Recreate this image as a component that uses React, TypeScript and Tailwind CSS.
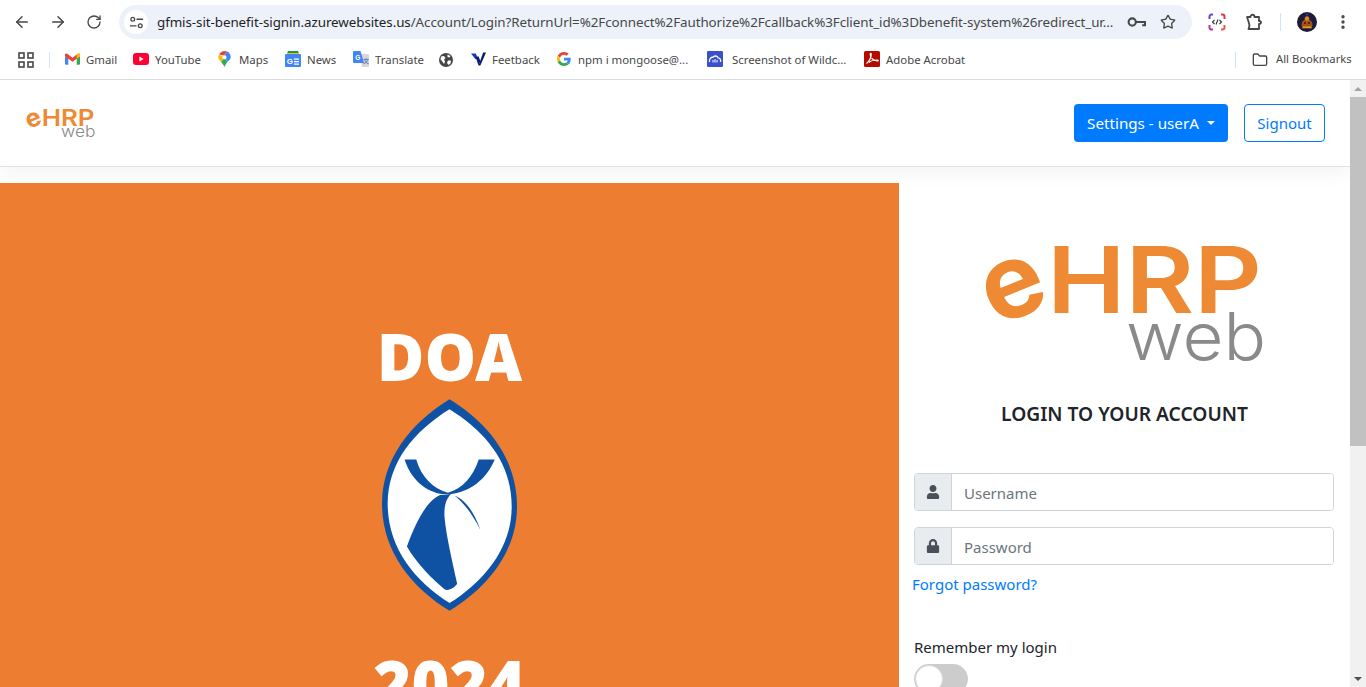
import { ArrowLeft, ArrowRight, RotateCw, Star, EllipsisVertical, Folder } from "lucide-react";
import { FaUser, FaLock } from "react-icons/fa";

function Logo({ className }: { className: string }) {
  return (
    <svg viewBox="0 0 277 118" className={`overflow-visible ${className}`}>
      <text x="27" y="72" textAnchor="middle" transform="rotate(-22 27 45)" fontFamily="Inter, sans-serif" fontWeight="700" fontSize="104" fill="#ee8a33">e</text>
      <text x="60" y="68" fontFamily="Inter, sans-serif" fontWeight="600" fontSize="92" fill="#ee8a33" textLength="215" lengthAdjust="spacingAndGlyphs">HRP</text>
      <text x="139" y="115" fontFamily="Inter, sans-serif" fontWeight="300" fontSize="66" fill="#8a8a8a" textLength="140" lengthAdjust="spacingAndGlyphs">web</text>
    </svg>
  );
}

function Emblem() {
  return (
    <svg viewBox="97 267 406 636" className="h-[212px] w-[135px]">
      <path fill="#0f52a3" d="M300 267C420 340 503 450 503 590C503 720 420 830 300 903C180 830 97 720 97 580C97 450 180 340 300 267Z" />
      <path fill="#fff" d="M300 297C410 365 487 460 487 590C487 710 410 810 300 880C190 810 114 710 114 580C114 460 190 365 300 297Z" />
      <path fill="#0f52a3" d="M165 448L200 448C215 500 250 535 295 548C340 535 370 500 388 448L436 448C410 510 360 545 305 552L275 552C215 540 180 495 165 448Z" />
      <path fill="#0f52a3" d="M272 555C235 570 200 630 172 710C200 760 250 810 285 838C295 845 315 835 323 822C310 760 290 680 285 620C283 590 290 565 305 552Z" />
      <path fill="#0f52a3" d="M316 557C350 570 375 610 393 660C370 615 345 580 316 557Z" />
    </svg>
  );
}

const GmailIcon = () => (
  <svg viewBox="0 0 16 12" className="h-[12px] w-[15px] shrink-0">
    <path fill="#4285f4" d="M0 3v8a1 1 0 0 0 1 1h2.500V5z" />
    <path fill="#34a853" d="M16 3v8a1 1 0 0 1-1 1h-2.500V5z" />
    <path fill="#ea4335" d="M0 1.500C0 .2 1.500-.4 2.400.4L8 4.600 13.600.4c.9-.8 2.400-.2 2.400 1.100V3l-3.500 2.600L8 9 3.500 5.600 0 3z" />
    <path fill="#fbbc04" d="M12.500 1.300V5.600L16 3V1.500C16 .2 14.500-.4 13.600.4z" />
  </svg>
);

const YoutubeIcon = () => (
  <svg viewBox="0 0 16 12" className="h-[12px] w-[16px] shrink-0">
    <rect width="16" height="12" rx="3" fill="#ff0033" />
    <path fill="#fff" d="M6.400 3.500v5L10.600 6z" />
  </svg>
);

const MapsIcon = () => (
  <svg viewBox="0 0 14 18" className="h-[16px] w-[13px] shrink-0">
    <path fill="#34a853" d="M3 12c1.500 2 3 3.500 4 6 1-2.500 2-4 3.500-6L7 8z" />
    <path fill="#fbbc04" d="M1 4C.3 5 0 6 0 7c0 2 1.500 3.500 3 5l4-4.500z" />
    <path fill="#4285f4" d="M10 .7 6 5l4.500 7C12.500 10 14 8.800 14 7c0-3-1.700-5.300-4-6.300z" />
    <path fill="#ea4335" d="M1 4l5 1 4-4.300C9 .2 8 0 7 0 4.500 0 2.300 1.500 1 4z" />
    <circle cx="7" cy="7" r="2.300" fill="#fff" />
  </svg>
);

const NewsIcon = () => (
  <svg viewBox="0 0 16 16" className="h-[16px] w-[16px] shrink-0">
    <path fill="#0c9d58" d="M2 2.500 3 0h10l1 2.500z" />
    <path fill="#fbbc04" d="M2 2h12v2H2z" />
    <rect y="3" width="16" height="13" rx="1" fill="#4285f4" />
    <text x="1.800" y="13" fontSize="8" fontWeight="700" fontFamily="Liberation Sans, sans-serif" fill="#fff">G</text>
    <path fill="#fff" d="M9 7.500h5v1.200H9zM9 10h5v1.200H9zM9 12.500h5v1.200H9z" />
  </svg>
);

const TranslateIcon = () => (
  <svg viewBox="0 0 16 16" className="h-[16px] w-[16px] shrink-0">
    <path fill="#d5d7da" d="M7 3h8a1 1 0 0 1 1 1v11a1 1 0 0 1-1 1H9z" />
    <path fill="#4285f4" d="M1 0h6.500L11 12H1a1 1 0 0 1-1-1V1a1 1 0 0 1 1-1z" />
    <text x="2.200" y="8.500" fontSize="6.500" fontWeight="700" fontFamily="Liberation Sans, sans-serif" fill="#fff">G</text>
    <text x="10" y="12" fontSize="6" fontWeight="700" fontFamily="Noto Sans CJK SC, sans-serif" fill="#5f7fb0">文</text>
  </svg>
);

const GlobeIcon = () => (
  <svg viewBox="0 0 14 14" className="h-[14px] w-[14px] shrink-0">
    <circle cx="7" cy="7" r="7" fill="#444746" />
    <path fill="#fff" d="M2 3.500 5 3l1.500 2L5 6.500 6 8.500 5 11 3 8 1.500 6.500zM8.500 1.500l3 1.500-1 1.500L8.500 4zM9 7.500h3l-.5 3-2 1.500L8 10z" />
  </svg>
);

const FeetbackIcon = () => (
  <svg viewBox="0 0 16 14" className="h-[14px] w-[15px] shrink-0">
    <path fill="#1736c9" d="M0 1h5l2 4-2 2.500z" />
    <path fill="#0b1d6b" d="M8 14 13 0h3L10 14z" />
    <path fill="#0b1d6b" d="M5 5l3-1 2 5-2 5z" />
  </svg>
);

const GoogleIcon = () => (
  <svg viewBox="0 0 48 48" className="h-[14px] w-[14px] shrink-0">
    <path fill="#ea4335" d="M24 9.500c3.500 0 6.600 1.200 9.100 3.600l6.800-6.800C35.800 2.500 30.300 0 24 0 14.600 0 6.500 5.400 2.600 13.200l7.900 6.200C12.400 13.700 17.700 9.500 24 9.500z" />
    <path fill="#4285f4" d="M46.900 24.500c0-1.600-.1-3.100-.4-4.500H24v9h12.900c-.6 3-2.200 5.500-4.700 7.200l7.700 6c4.500-4.200 7-10.300 7-17.700z" />
    <path fill="#fbbc05" d="M10.500 28.600c-.5-1.400-.8-3-.8-4.600s.3-3.200.8-4.600l-7.900-6.200C.9 16.500 0 20.100 0 24s.9 7.500 2.600 10.800z" />
    <path fill="#34a853" d="M24 48c6.500 0 11.900-2.100 15.900-5.800l-7.700-6c-2.200 1.400-4.900 2.300-8.200 2.300-6.300 0-11.600-4.200-13.500-9.900l-7.900 6.200C6.500 42.600 14.600 48 24 48z" />
  </svg>
);

const CloudIcon = () => (
  <svg viewBox="0 0 16 16" className="h-[16px] w-[16px] shrink-0">
    <rect width="16" height="16" rx="1" fill="#3a50c8" />
    <path fill="none" stroke="#fff" strokeWidth="1.300" d="M2.500 11C2 8 4 6 6 6.300 7 4.500 10.500 4.500 11 6.800c2-.2 3 2 2.500 4.200" />
    <path stroke="#fff" strokeWidth="1" d="M6 9v2.500M8 8v3.500M10 9v2.500" />
  </svg>
);

const AcrobatIcon = () => (
  <svg viewBox="0 0 16 16" className="h-[16px] w-[16px] shrink-0">
    <rect width="16" height="16" rx="1.500" fill="#b30b00" />
    <path fill="none" stroke="#fff" strokeWidth="1.200" d="M2.500 12.500C5 11 7.500 6 7.200 3c-.2-1-1-.8-1 .3C6.200 7 10 10 13.500 10c1 0 1-1-.2-1-3 0-7 1-8.300 2.500" />
  </svg>
);

const bookmarks = [
  { label: "Gmail", icon: GmailIcon, w: "w-[14px]", tw: "w-[31px]", gap: "mr-[16px]" },
  { label: "YouTube", icon: YoutubeIcon, w: "w-[15px]", tw: "w-[46px]", gap: "mr-[17px]" },
  { label: "Maps", icon: MapsIcon, w: "w-[14px]", tw: "w-[29px]", gap: "mr-[17px]" },
  { label: "News", icon: NewsIcon, w: "w-[15px]", tw: "w-[29px]", gap: "mr-[17px]" },
  { label: "Translate", icon: TranslateIcon, w: "w-[15px]", tw: "w-[47px]", gap: "mr-[17px]" },
];

const bookmarks2 = [
  { label: "Feetback", icon: FeetbackIcon, w: "w-[14px]", tw: "w-[48px]", gap: "mr-[17px]" },
  { label: "npm i mongoose@...", icon: GoogleIcon, w: "w-[14px]", tw: "w-[112px]", gap: "mr-[17px]" },
  { label: "Screenshot of Wildc...", icon: CloudIcon, w: "w-[18px]", tw: "w-[115px]", gap: "mr-[17px]" },
  { label: "Adobe Acrobat", icon: AcrobatIcon, w: "w-[15px]", tw: "w-[81px]", gap: "" },
];

type Mark = (typeof bookmarks)[number];

function Bookmark({ mark }: { mark: Mark }) {
  const Icon = mark.icon;
  return (
    <div className={`flex items-center gap-[7px] ${mark.gap}`}>
      <div className={`flex justify-start ${mark.w}`}>
        <Icon />
      </div>
      <span className={`whitespace-nowrap text-[11.400px] text-[#474747] ${mark.tw}`}>{mark.label}</span>
    </div>
  );
}

function BrowserChrome() {
  return (
    <header className="h-[80px] shrink-0 border-b border-[#dadce0] bg-white font-['Noto_Sans',sans-serif]">
      {/* Toolbar */}
      <div className="flex h-[40px] items-center pl-[13px] pr-[12px] pt-[4px]">
        <ArrowLeft className="h-[18px] w-[18px] text-[#474747]" />
        <ArrowRight className="ml-[18px] h-[18px] w-[18px] text-[#474747]" />
        <RotateCw className="ml-[19px] h-[16px] w-[16px] text-[#474747]" />
        <div className="ml-[17px] flex h-[34px] w-[1073px] items-center rounded-full bg-[#edf2fa] pl-[5px] pr-[14px]">
          <div className="flex h-[24px] w-[24px] items-center justify-center rounded-full bg-white">
            <svg viewBox="0 0 16 16" className="h-[15px] w-[15px]" fill="none" stroke="#474747" strokeWidth="1.400">
              <circle cx="4" cy="4.500" r="2" />
              <path d="M8 4.500h7M1 11.500h7" />
              <circle cx="12" cy="11.500" r="2" />
            </svg>
          </div>
          <span className="ml-[9px] w-[957px] shrink-0 overflow-hidden whitespace-nowrap text-[13.400px] tracking-[-0.08px] text-[#1f1f1f]">
            gfmis-sit-benefit-signin.azurewebsites.us<span className="text-[#474747]">/Account/Login?ReturnUrl=%2Fconnect%2Fauthorize%2Fcallback%3Fclient_id%3Dbenefit-system%26redirect_ur...</span>
          </span>
          <svg viewBox="0 0 20 12" className="ml-[13px] h-[12px] w-[19px] shrink-0" fill="none" stroke="#474747" strokeWidth="2.200">
            <circle cx="5.500" cy="6" r="3.800" />
            <path d="M9 6h10v3.500h-3" />
          </svg>
          <Star className="ml-[14px] h-[16px] w-[16px] shrink-0 text-[#474747]" strokeWidth={2} />
        </div>
        <svg viewBox="0 0 18 18" className="ml-[16px] h-[18px] w-[18px] shrink-0" fill="none" strokeWidth="2">
          <path stroke="#6a3fd8" d="M5 1.500H3.500a2 2 0 0 0-2 2V6" />
          <path stroke="#e0354a" d="M13 1.500h1.500a2 2 0 0 1 2 2V6" />
          <path stroke="#ef5a3c" d="M16.500 12v2.500a2 2 0 0 1-2 2H13" />
          <path stroke="#c2357f" d="M5 16.500H3.500a2 2 0 0 1-2-2V12" />
          <path stroke="#333" strokeWidth="1.100" d="M6.500 7 4.500 9l2 2M11.500 7l2 2-2 2M10 6.500l-2 5" />
        </svg>
        {/* extensions icon */}
        <svg viewBox="0 0 18 18" className="ml-[19px] h-[18px] w-[18px] shrink-0" fill="none" stroke="#474747" strokeWidth="1.800" strokeLinejoin="round">
          <path d="M2 4h3.500C5.500 1 9.500 1 9.500 4H14v4c2.600 0 2.600 3 0 3v5H3.500L4.500 12.500 3.500 8.500z" />
        </svg>
        <div className="ml-[17px] h-[18px] w-px bg-[#d3e3fd]" />
        <div className="ml-[16px] h-[20px] w-[20px] shrink-0">
          <svg viewBox="0 0 20 20" className="h-[20px] w-[20px]">
            <circle cx="10" cy="10" r="10" fill="#1f1a3a" />
            <path fill="#a0541a" d="M5 15c-1-3 0-6 2.500-7 0-3 5-3 5 0C15 9 16 12 15 15z" />
            <circle cx="10" cy="6.500" r="2.200" fill="#d98a1f" />
            <path fill="#e8a01f" d="M6 14.500h8l1 1.800H5z" />
            <circle cx="8" cy="11" r="1" fill="#3a1508" />
            <circle cx="12" cy="11" r="1" fill="#3a1508" />
            <circle cx="10" cy="2.500" r="1" fill="#5a3aa8" />
          </svg>
        </div>
        <EllipsisVertical className="ml-[17px] h-[18px] w-[18px] shrink-0 text-[#474747]" strokeWidth={2.500} />
      </div>
      {/* Bookmarks */}
      <div className="flex h-[39px] items-center pl-[18px]">
        <svg viewBox="0 0 16 16" className="h-[16px] w-[16px]" fill="none" stroke="#474747" strokeWidth="1.600">
          <rect x="1" y="1" width="5" height="5" />
          <rect x="10" y="1" width="5" height="5" />
          <rect x="1" y="10" width="5" height="5" />
          <rect x="10" y="10" width="5" height="5" />
        </svg>
        <div className="ml-[15px] mr-[15px] h-[16px] w-px bg-[#d3e3fd]" />
        {bookmarks.map((m) => (
          <Bookmark key={m.label} mark={m} />
        ))}
        <div className="mr-[18px]">
          <GlobeIcon />
        </div>
        {bookmarks2.map((m) => (
          <Bookmark key={m.label} mark={m} />
        ))}
        <div className="ml-[268px] mr-[16px] h-[16px] w-px bg-[#d3e3fd]" />
        <Folder className="h-[16px] w-[16px] text-[#474747]" />
        <span className="ml-[8px] whitespace-nowrap text-[11.250px] text-[#474747]">All Bookmarks</span>
      </div>
    </header>
  );
}

function Scrollbar() {
  return (
    <div className="flex w-[16px] shrink-0 flex-col items-center bg-[#f1f1f1]">
      <div className="flex h-[17px] w-full items-center justify-center">
        <div className="h-0 w-0 border-x-[4px] border-b-[4px] border-x-transparent border-b-[#a3a3a3]" />
      </div>
      <div className="h-[349px] w-full bg-[#c1c1c1]" />
      <div className="flex-1" />
      <div className="flex h-[17px] w-full items-center justify-center">
        <div className="h-0 w-0 border-x-[4px] border-t-[4px] border-x-transparent border-t-[#505050]" />
      </div>
    </div>
  );
}

function InputRow({ icon, placeholder }: { icon: React.ReactNode; placeholder: string }) {
  return (
    <div className="flex h-[38px] w-[420px] overflow-hidden rounded-[4px] border border-[#ced4da]">
      <div className="flex w-[37px] shrink-0 items-center justify-center border-r border-[#ced4da] bg-[#e9ecef] text-[#495057]">
        {icon}
      </div>
      <input
        placeholder={placeholder}
        className="w-full bg-white px-[12px] pt-[2px] text-[15px] outline-none placeholder:text-[#6c757d]"
      />
    </div>
  );
}

export default function App() {
  return (
    <div className="flex h-[687px] w-full flex-col overflow-hidden bg-white text-[#212529]">
      <BrowserChrome />
      <div className="flex min-h-0 flex-1 font-['Noto_Sans',sans-serif]">
        <main className="min-w-0 flex-1 overflow-hidden">
          {/* Navbar */}
          <nav className="flex h-[87px] items-center justify-between border-b border-[#dee2e6] pl-[27px] pr-[25px] shadow-[0_8px_16px_rgba(0,0,0,0.04)]">
            <Logo className="h-[29px] w-[68px]" />
            <div className="flex items-center gap-[16px]">
              <button className="flex h-[38px] w-[154px] items-center justify-center rounded-[4px] bg-[#007bff] text-[15.200px] text-white">
                Settings - userA
                <span className="ml-[8px] h-0 w-0 border-x-[4.500px] border-t-[4.500px] border-x-transparent border-t-white" />
              </button>
              <button className="h-[38px] w-[81px] rounded-[4px] border border-[#007bff] text-[15px] text-[#007bff]">
                Signout
              </button>
            </div>
          </nav>

          <div className="mt-[16px] flex">
            {/* Banner */}
            <section className="flex h-[560px] w-[899px] shrink-0 flex-col items-center bg-[#ed7d31] pt-[128px] font-['Noto_Sans',sans-serif] font-black text-white">
              <div className="text-[65px] leading-[90px]">DOA</div>
              <div className="-mt-[2px]">
                <Emblem />
              </div>
              <div className="mt-[27px] text-[65px] leading-[90px]">2024</div>
            </section>

            {/* Login form */}
            <section className="flex-1 pl-[15px]">
              <div className="mt-[62px] flex justify-center pr-[14px]">
                <Logo className="h-[118px] w-[277px]" />
              </div>
              <h1 className="mt-[37px] pr-[15px] text-center text-[19.200px] font-semibold leading-[28px] text-[#212529]">
                LOGIN TO YOUR ACCOUNT
              </h1>
              <div className="mt-[45px] flex flex-col gap-[16px]">
                <InputRow icon={<FaUser className="h-[14px] w-[14px]" />} placeholder="Username" />
                <InputRow icon={<FaLock className="h-[14px] w-[14px]" />} placeholder="Password" />
              </div>
              <a className="-ml-[2px] mt-[7px] block text-[15px] leading-[24px] text-[#007bff]">Forgot password?</a>
              <div className="mt-[39px] text-[15px] leading-[24px] text-[#212529]">Remember my login</div>
              <div className="mt-[5px] h-[30px] w-[54px] rounded-full bg-[#ccc] p-[1px]">
                <div className="h-[28px] w-[28px] rounded-full border border-[#ddd] bg-white" />
              </div>
            </section>
          </div>
        </main>
        <Scrollbar />
      </div>
    </div>
  );
}
